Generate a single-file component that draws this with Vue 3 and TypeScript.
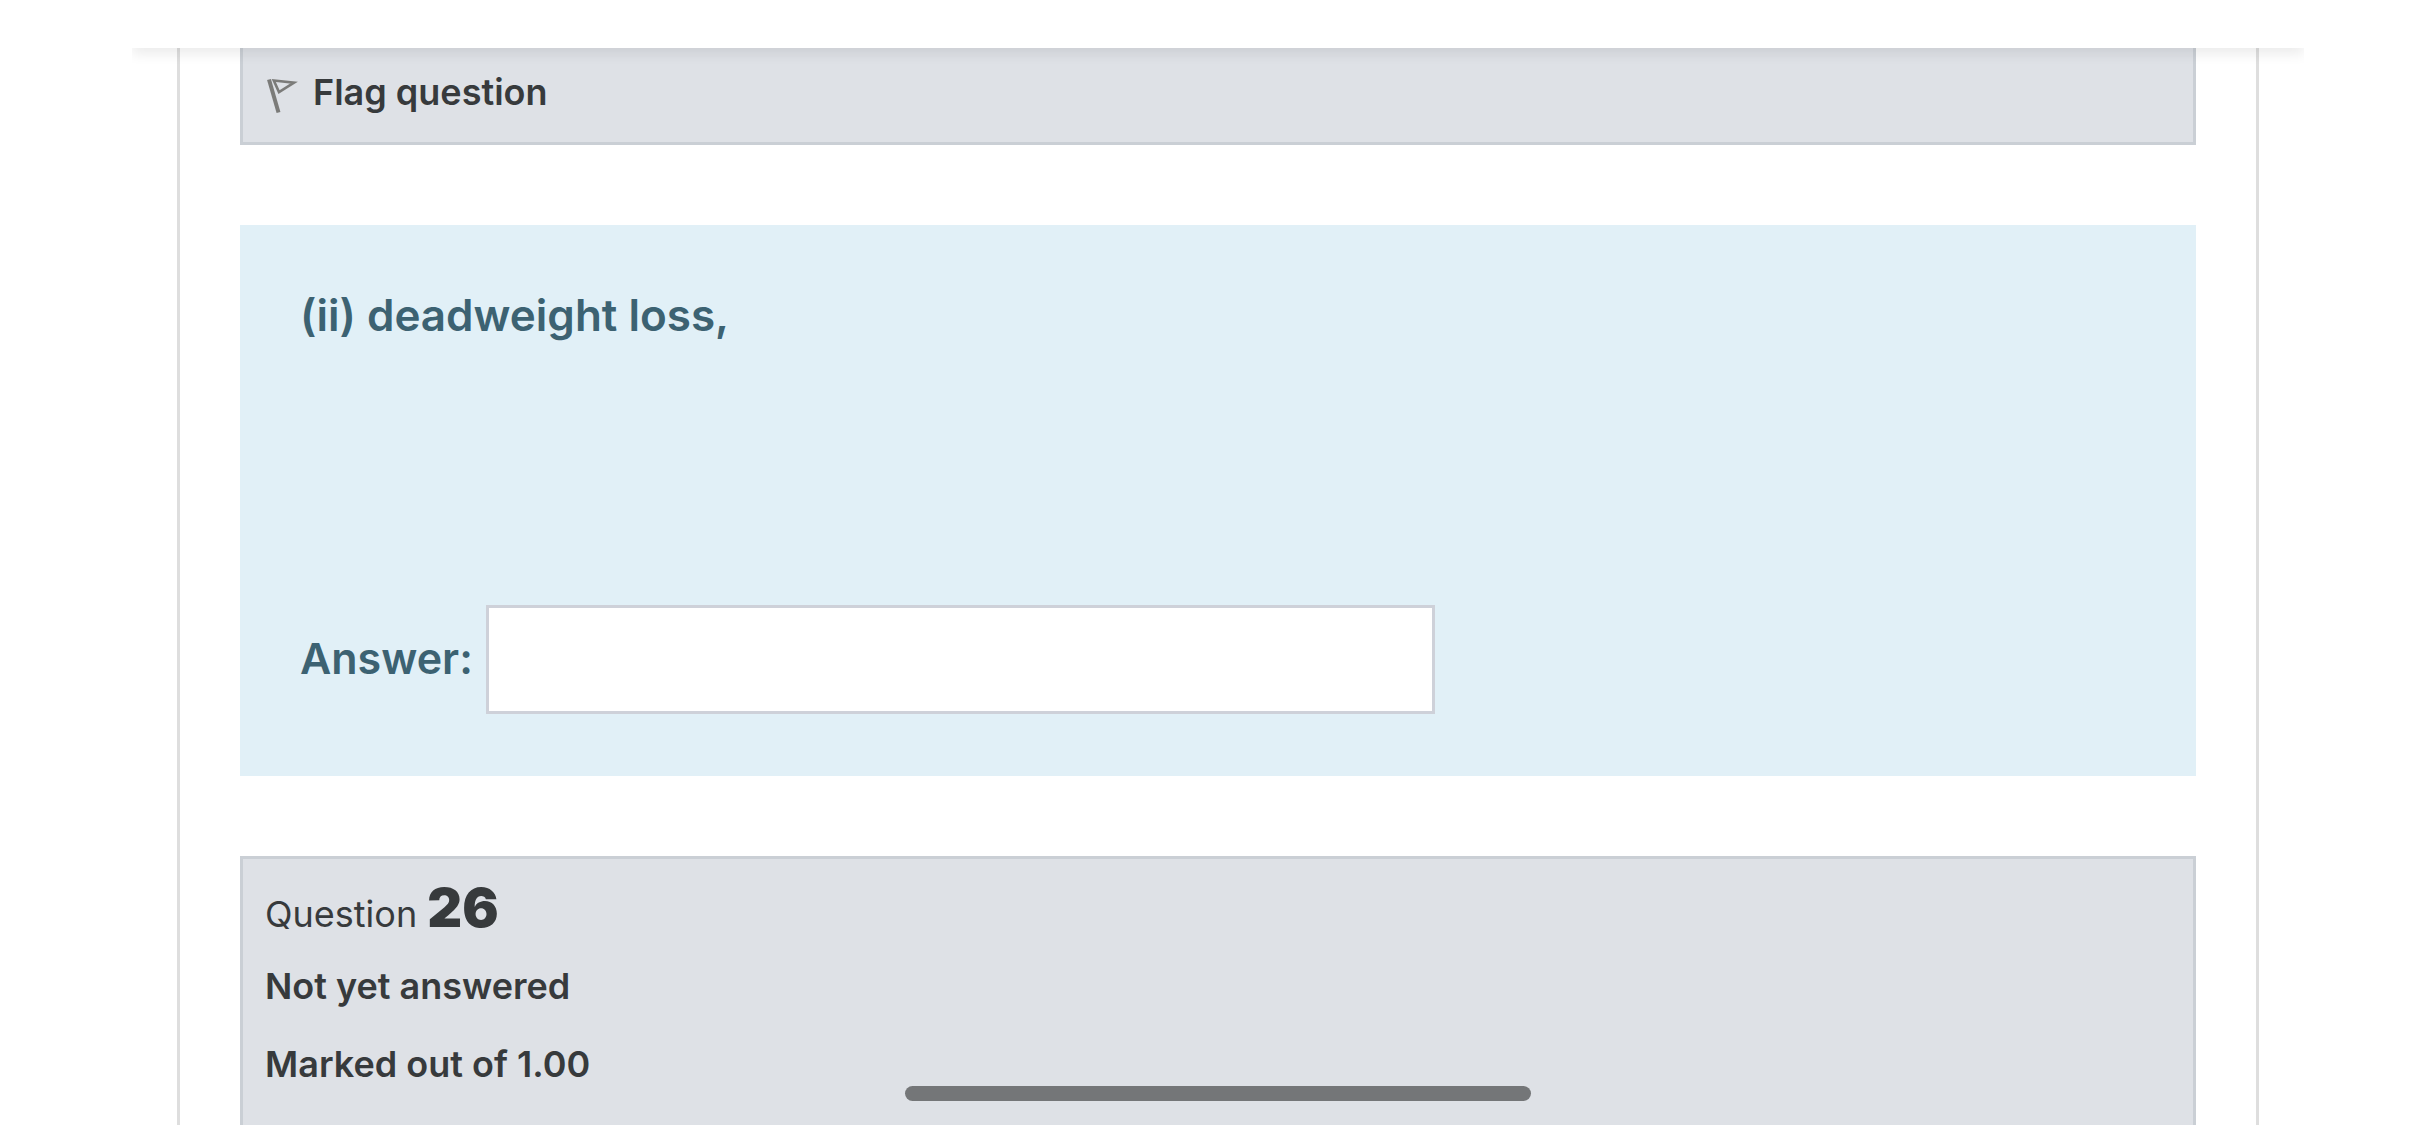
<script setup lang="ts">
import { ref } from 'vue'

interface Question {
  number: number
  state: string
  grade: string
}

const answer = ref('')
const flagged = ref(false)
const prompt = '(ii) deadweight loss,'
const next: Question = { number: 26, state: 'Not yet answered', grade: 'Marked out of 1.00' }
</script>

<template>
  <div class="page">
    <div class="safe-area">
      <header class="topbar"></header>
      <main class="card">
        <section class="info info-end">
          <button class="flag" type="button" :aria-pressed="flagged" @click="flagged = !flagged">
            <svg class="flag-icon" viewBox="0 0 36 44" aria-hidden="true">
              <path d="M4 9.500 13.500 42.500" fill="none" stroke="#7b7b79" stroke-width="4" />
              <path d="M8.800 10.500 29 12.700 14 22Z" fill="none" stroke="#7b7b79" stroke-width="2.600" />
            </svg>
            <span>Flag question</span>
          </button>
        </section>

        <section class="formulation">
          <p class="prompt">{{ prompt }}</p>
          <div class="answer-row">
            <label for="answer">Answer:</label>
            <input id="answer" v-model="answer" type="text" autocomplete="off" />
          </div>
        </section>

        <section class="info info-start">
          <h3 class="number">Question <strong>{{ next.number }}</strong></h3>
          <p>{{ next.state }}</p>
          <p>{{ next.grade }}</p>
        </section>
      </main>
    </div>
    <div class="home-indicator"></div>
  </div>
</template>

<style>
body {
  margin: 0;
  background: #fff;
}
</style>

<style scoped>
.page {
  position: relative;
  height: 100vh;
  box-sizing: border-box;
  padding: 0 132px;
  overflow: hidden;
  background: #fff;
  color: #373a3c;
  font-family: Inter, "Liberation Sans", sans-serif;
  font-size: 36px;
  font-weight: 600;
}
.safe-area {
  display: flex;
  flex-direction: column;
  height: 100%;
  overflow: hidden;
}
.topbar {
  position: relative;
  z-index: 1;
  flex: none;
  height: 48px;
  background: #fff;
  box-shadow: 0 6px 12px rgba(0, 0, 0, 0.08);
}
.card {
  display: flex;
  flex: 1;
  flex-direction: column;
  gap: 80px;
  margin: 0 45px;
  padding: 0 60px;
  border: solid #dedede;
  border-width: 0 3px;
}
.info {
  box-sizing: border-box;
  padding: 22px;
  border: 3px solid #cacfd5;
  background: #dee1e6;
}
.info-end {
  padding-top: 20px;
  padding-bottom: 26px;
  border-top: 0;
}
.info-start {
  flex: 1;
  border-bottom: 0;
}
.flag {
  display: flex;
  align-items: center;
  gap: 12px;
  padding: 0;
  border: 0;
  background: none;
  color: inherit;
  font: inherit;
  line-height: 48px;
}
.flag-icon {
  width: 36px;
  height: 44px;
}
.formulation {
  display: flex;
  flex-direction: column;
  gap: 260px;
  padding: 60px 60px 62px;
  background: #e1f0f7;
  color: #3c6272;
  font-size: 44px;
}
.prompt {
  margin: 0;
  line-height: 60px;
}
.answer-row {
  display: flex;
  align-items: center;
  gap: 13px;
}
.answer-row label {
  padding-bottom: 4px;
  font-size: 43px;
}
.answer-row input {
  width: 949px;
  height: 109px;
  box-sizing: border-box;
  padding: 18px 36px;
  border: 3px solid #ced1d9;
  border-radius: 0;
  outline: 0;
  background: #fff;
  color: #495057;
  font: inherit;
}
.number {
  margin: 0 0 18px;
  font-size: 36px;
  font-weight: 400;
  line-height: 54px;
}
.number strong {
  font-size: 54px;
  font-weight: 900;
}
.info p {
  margin: 0 0 24px;
  line-height: 54px;
}
.home-indicator {
  position: absolute;
  bottom: 24px;
  left: 50%;
  width: 626px;
  height: 15px;
  border-radius: 8px;
  background: #747678;
  transform: translateX(-50%);
}
</style>
